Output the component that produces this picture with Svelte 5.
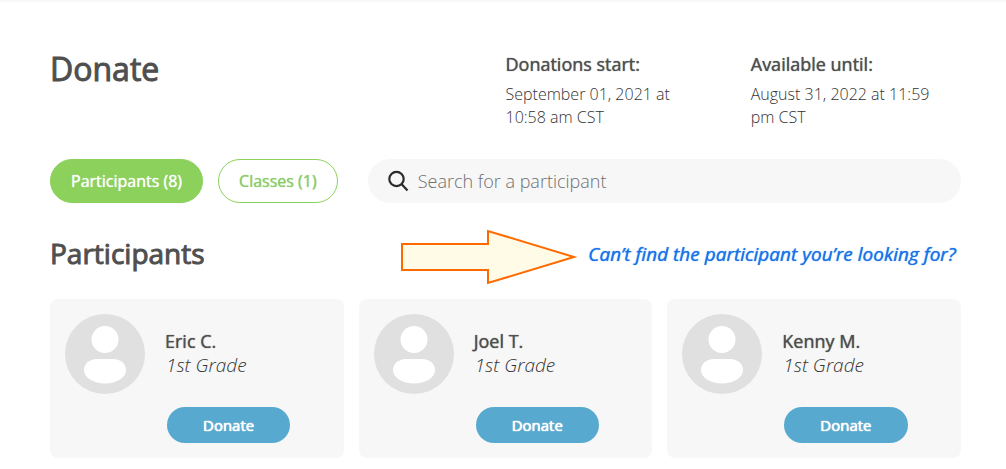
<script>
	let search = $state("");
	let tab = $state("participants");

	const dates = [
		{ label: "Donations start:", value: "September 01, 2021 at 10:58 am CST" },
		{ label: "Available until:", value: "August 31, 2022 at 11:59 pm CST" },
	];

	const tabs = [
		{ id: "participants", label: "Participants (8)" },
		{ id: "classes", label: "Classes (1)" },
	];

	const participants = [
		{ name: "Eric C.", grade: "1st Grade" },
		{ name: "Joel T.", grade: "1st Grade" },
		{ name: "Kenny M.", grade: "1st Grade" },
	];
</script>

<main>
	<header>
		<h1>Donate</h1>
		<dl>
			{#each dates as { label, value }}
				<div>
					<dt>{label}</dt>
					<dd>{value}</dd>
				</div>
			{/each}
		</dl>
	</header>

	<div class="toolbar">
		<div class="tabs">
			{#each tabs as { id, label }}
				<button class="tab" class:active={tab === id} onclick={() => (tab = id)}>
					{label}
				</button>
			{/each}
		</div>
		<label class="search">
			<svg width="22" height="22" viewBox="0 0 22 22" aria-hidden="true">
				<circle cx="8.500" cy="9" r="7.200" />
				<path d="M13.500 14l6 6.500" />
			</svg>
			<input
				type="text"
				aria-label="Search for a participant"
				placeholder="Search for a participant"
				bind:value={search}
			/>
		</label>
	</div>

	<div class="heading">
		<h2>Participants</h2>
		<div class="help">
			<svg width="178" height="56" viewBox="0 0 178 56" aria-hidden="true">
				<path d="M2 15H88V2L174 28L88 54V41H2Z" />
			</svg>
			<a href="#help">Can’t find the participant you’re looking for?</a>
		</div>
	</div>

	<ul class="cards">
		{#each participants as { name, grade }}
			<li class="card">
				<svg class="avatar" width="80" height="80" viewBox="0 0 80 80" aria-hidden="true">
					<circle cx="40" cy="40" r="40" fill="#e0e0e0" />
					<circle cx="40" cy="25.500" r="13.500" fill="#fff" />
					<path
						d="M32 45H48C56 45 61 50 61 56C61 64 51 69.500 40 69.500S19 64 19 56C19 50 24 45 32 45Z"
						fill="#fff"
					/>
				</svg>
				<div class="info">
					<h3>{name}</h3>
					<p>{grade}</p>
					<button class="donate">Donate</button>
				</div>
			</li>
		{/each}
	</ul>
</main>

<style>
	:global(body) {
		margin: 0;
		background: #fff;
	}
	main {
		box-sizing: border-box;
		border-top: 2px solid #f7f7f7;
		padding: 44px 45px 10px 50px;
		font-family: "Open Sans", sans-serif;
		color: #4f4f4f;
	}
	h1,
	h2,
	h3,
	p,
	dl,
	dd,
	ul {
		margin: 0;
		padding: 0;
	}
	h1,
	h2,
	h3,
	dt,
	a,
	button {
		font-weight: 400;
		text-shadow: 0 0 1px currentColor;
	}
	h1,
	h2 {
		text-shadow: none;
		-webkit-text-stroke: 1px currentColor;
	}
	button,
	input {
		font-family: inherit;
	}
	button {
		font-size: 16px;
		cursor: pointer;
	}
	header {
		display: grid;
		grid-template-columns: 1fr 1fr;
		min-height: 113px;
	}
	h1 {
		font-size: 32px;
		line-height: 46px;
	}
	dl {
		display: grid;
		grid-template-columns: 1fr 1fr;
		gap: 35px;
		padding-top: 5px;
	}
	dt {
		font-size: 18px;
		line-height: 26px;
		margin-bottom: 6px;
	}
	dd {
		padding-right: 24px;
		font-size: 16px;
		font-weight: 300;
		line-height: 23px;
		color: #333;
	}
	.toolbar {
		display: flex;
		gap: 30px;
	}
	.tabs {
		display: flex;
		gap: 15px;
	}
	.tab {
		height: 44px;
		padding: 0 20px 1px;
		border: 1px solid #8bd15b;
		border-radius: 22px;
		background: #fff;
		color: #8bcb6b;
		white-space: nowrap;
	}
	.tab.active {
		background: #8bd15b;
		color: #fff;
	}
	.search {
		flex: 1;
		display: flex;
		align-items: center;
		gap: 8px;
		padding: 0 20px;
		border-radius: 22px;
		background: #f7f7f7;
	}
	.search svg {
		fill: none;
		stroke: #2b2b2b;
		stroke-width: 2.200;
	}
	.search input {
		flex: 1;
		min-width: 0;
		padding: 0;
		border: none;
		outline: none;
		background: none;
		font-size: 18px;
		font-weight: 300;
		color: #4f4f4f;
	}
	.search input::placeholder {
		color: #6f6f6f;
		opacity: 1;
	}
	.heading {
		display: flex;
		align-items: center;
		justify-content: space-between;
		padding: 26px 5px 14px 0;
	}
	h2 {
		font-size: 28px;
		line-height: 38px;
		padding-bottom: 8px;
	}
	.help {
		display: flex;
		align-items: center;
		gap: 10px;
	}
	.help svg {
		fill: #fffbe6;
		stroke: #ff6a00;
		stroke-width: 2;
	}
	a {
		font-size: 19px;
		font-style: italic;
		line-height: 24px;
		padding-bottom: 6px;
		color: #1a73e8;
		text-decoration: none;
	}
	.cards {
		display: grid;
		grid-template-columns: repeat(3, 1fr);
		gap: 15px;
		list-style: none;
	}
	.card {
		display: flex;
		gap: 20px;
		padding: 15px;
		border-radius: 8px;
		background: #f7f7f7;
	}
	.avatar {
		flex: none;
	}
	.info {
		padding-top: 15px;
	}
	h3,
	p {
		font-size: 18px;
		line-height: 24px;
	}
	p {
		font-size: 19px;
		font-style: italic;
		font-weight: 300;
		padding-left: 1px;
		color: #333;
	}
	.donate {
		display: block;
		height: 36px;
		margin: 30px 0 0 2px;
		padding: 0 36px;
		border: none;
		border-radius: 18px;
		background: #58a9cf;
		font-size: 15px;
		color: #fff;
		text-shadow: 0 0 1px currentColor, 0 0 1px currentColor;
	}
</style>
